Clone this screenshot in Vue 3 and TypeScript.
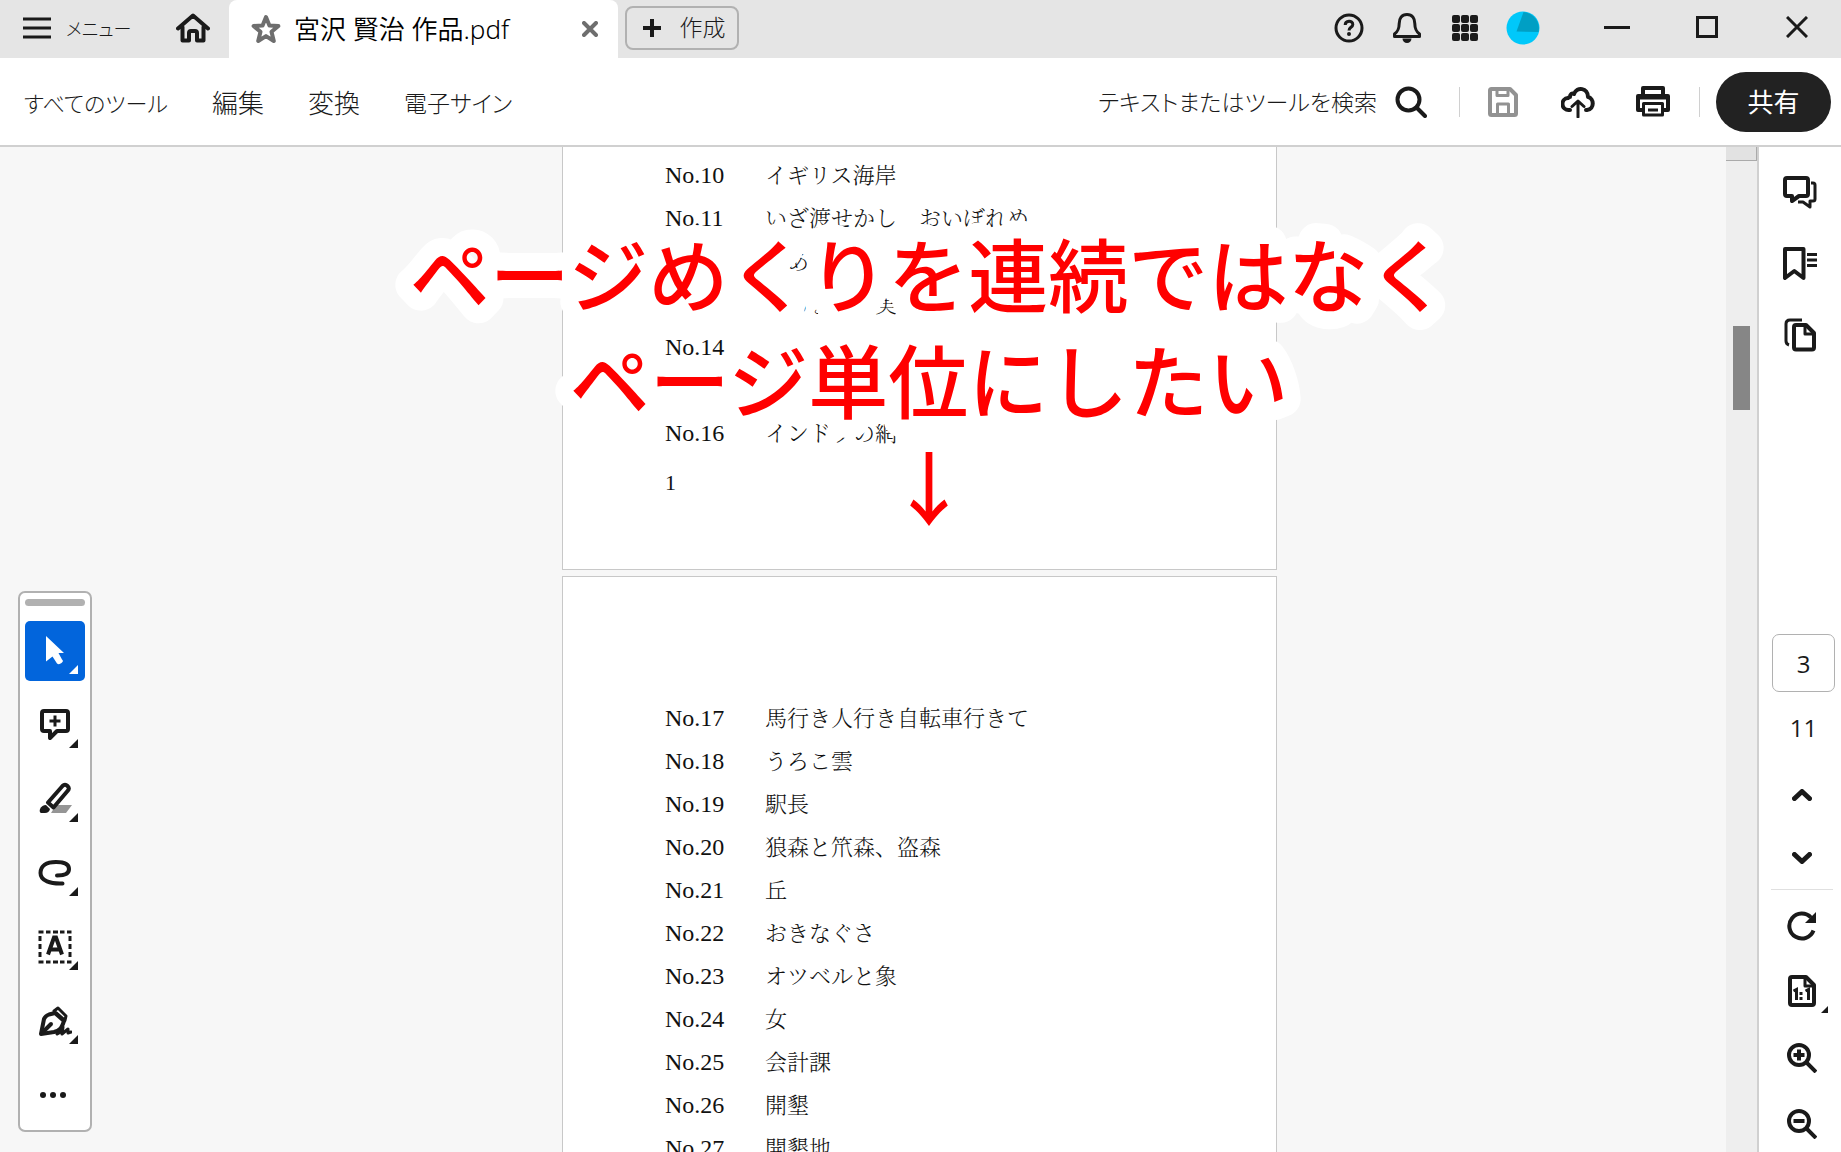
<script setup lang="ts">
interface Menu {
  label: string
  size: 'small' | 'medium' | 'large'
}

interface Entry {
  id: number
  no: string
  title: string
}

const menus: Menu[] = [
  { label: 'すべてのツール', size: 'small' },
  { label: '編集', size: 'large' },
  { label: '変換', size: 'large' },
  { label: '電子サイン', size: 'medium' },
]

const firstPage: Entry[] = [
  { id: 10, no: 'No.10', title: 'イギリス海岸' },
  { id: 11, no: 'No.11', title: 'いざ渡せかし　おいぼれめ' },
  { id: 12, no: '', title: '泉ある家' },
  { id: 13, no: '', title: 'いちょうの実' },
  { id: 14, no: 'No.14', title: '' },
  { id: 15, no: '', title: '' },
  { id: 16, no: 'No.16', title: 'インドラの網' },
]

const secondPage: Entry[] = [
  { id: 17, no: 'No.17', title: '馬行き人行き自転車行きて' },
  { id: 18, no: 'No.18', title: 'うろこ雲' },
  { id: 19, no: 'No.19', title: '駅長' },
  { id: 20, no: 'No.20', title: '狼森と笊森、盗森' },
  { id: 21, no: 'No.21', title: '丘' },
  { id: 22, no: 'No.22', title: 'おきなぐさ' },
  { id: 23, no: 'No.23', title: 'オツベルと象' },
  { id: 24, no: 'No.24', title: '女' },
  { id: 25, no: 'No.25', title: '会計課' },
  { id: 26, no: 'No.26', title: '開墾' },
  { id: 27, no: 'No.27', title: '開墾地' },
]
</script>

<template>
  <div class="app">
    <header class="titlebar">
      <button class="menu" type="button">
        <svg width="28" height="22" viewBox="0 0 28 22" fill="none" stroke="currentColor" stroke-width="3"><path d="M0 2h28M0 11h28M0 20h28" /></svg>
        <span>メニュー</span>
      </button>
      <button class="home" type="button" aria-label="ホーム">
        <svg width="34" height="30" viewBox="0 0 34 30" fill="none" stroke="currentColor" stroke-width="4" stroke-linejoin="round" stroke-linecap="round"><path d="M2 15.500 17 2.500l15 13M6.500 14v13.500h6.500v-7.500q0-2 2-2h4q2 0 2 2v7.500h6.500V14" /></svg>
      </button>
      <div class="tab">
        <svg class="star" width="30" height="30" viewBox="0 0 30 30" fill="none" stroke="currentColor" stroke-width="4" stroke-linejoin="round"><path d="m15 3 3.400 8.400 9 .6-6.900 5.800 2.300 9.200-7.800-4.900L7.200 27l2.300-9.200L2.600 12l9-.6z" /></svg>
        <span class="tab-title">宮沢 賢治 作品.pdf</span>
        <button class="tab-close" type="button" aria-label="タブを閉じる">
          <svg width="16" height="16" viewBox="0 0 16 16" fill="none" stroke="currentColor" stroke-width="4" stroke-linecap="round"><path d="m2 2 12 12M14 2 2 14" /></svg>
        </button>
      </div>
      <button class="create" type="button">
        <svg width="18" height="18" viewBox="0 0 18 18" fill="none" stroke="currentColor" stroke-width="4"><path d="M9 0v18M0 9h18" /></svg>
        <span>作成</span>
      </button>
      <div class="account">
        <button type="button" aria-label="ヘルプ">
          <svg width="30" height="30" viewBox="0 0 30 30" fill="none" stroke="currentColor" stroke-width="3"><circle cx="15" cy="15" r="13" /><path d="M11.200 12c0-5 7.600-5 7.600-.6 0 2.800-3.800 3-3.800 6" /><circle cx="15" cy="21" r="1" stroke-width="2" /></svg>
        </button>
        <button type="button" aria-label="通知">
          <svg width="30" height="32" viewBox="0 0 30 32" fill="none" stroke="currentColor" stroke-width="3" stroke-linejoin="round"><path d="M15 2.500c-5.500 0-7.800 4-7.800 9C7.200 18 5 20 2.500 22v2.500h25V22c-2.500-2-4.700-4-4.700-10.500 0-5-2.300-9-7.800-9z" /><path d="M10.500 26.500h9a4.500 4.500 0 0 1-9 0z" fill="currentColor" stroke="none" /></svg>
        </button>
        <button type="button" aria-label="アプリ">
          <svg width="28" height="28" viewBox="0 0 28 28" fill="currentColor"><g v-for="r in 3" :key="r"><rect v-for="c in 3" :key="c" :x="(c - 1) * 9 + 1" :y="(r - 1) * 9 + 1" width="8" height="8" rx="2" /></g></svg>
        </button>
        <button type="button" aria-label="アカウント">
          <svg width="34" height="34" viewBox="0 0 34 34"><circle cx="17" cy="17" r="16.500" fill="#00c8fa" /><path d="M17.500 1 10.500 20.500 32.500 21A16.500 16.500 0 0 0 17.500 1z" fill="#009fc4" /></svg>
        </button>
      </div>
      <div class="window-buttons">
        <button type="button" aria-label="最小化">
          <svg width="26" height="22" viewBox="0 0 26 22" fill="none" stroke="currentColor" stroke-width="3"><path d="M0 11.500h26" /></svg>
        </button>
        <button type="button" aria-label="最大化">
          <svg width="22" height="22" viewBox="0 0 22 22" fill="none" stroke="currentColor" stroke-width="3"><path d="M1.500 1.500h19v19h-19z" /></svg>
        </button>
        <button type="button" aria-label="閉じる">
          <svg width="22" height="22" viewBox="0 0 22 22" fill="none" stroke="currentColor" stroke-width="3"><path d="m1 1 20 20M21 1 1 21" /></svg>
        </button>
      </div>
    </header>

    <div class="toolbar">
      <nav class="menus">
        <button v-for="m in menus" :key="m.label" type="button" :class="m.size">{{ m.label }}</button>
      </nav>
      <button class="search" type="button">
        <span>テキストまたはツールを検索</span>
        <svg width="32" height="32" viewBox="0 0 32 32" fill="none" stroke="currentColor" stroke-width="4" stroke-linecap="round"><circle cx="13.500" cy="13.500" r="11" /><path d="m22 22 8 8" /></svg>
      </button>
      <span class="rule"></span>
      <div class="file-tools">
        <button type="button" aria-label="保存" disabled>
          <svg width="30" height="30" viewBox="0 0 30 30" fill="none" stroke="currentColor" stroke-width="4" stroke-linejoin="round"><path d="M2 3.500Q2 2 3.500 2H22l6 6v18.500q0 1.500-1.500 1.500h-23Q2 28 2 26.500z" /><path d="M9 2v6.500h11V2M9.500 28V17h11v11" stroke-width="3" /></svg>
        </button>
        <button type="button" aria-label="クラウドに保存">
          <svg width="34" height="32" viewBox="0 0 34 32" fill="none" stroke="currentColor" stroke-width="4" stroke-linecap="round" stroke-linejoin="round"><path d="M9 24H8a6 6 0 0 1-1-12c1-1 1-1 2-1 0-3 2-4 4-3 3-8 14-6 14 3 6 1 7 12-1 13h-1" /><path d="M17 31V16M11 20.500l6-5.500 6 5.500" stroke-width="3" /></svg>
        </button>
        <button type="button" aria-label="印刷">
          <svg width="34" height="32" viewBox="0 0 34 32" fill="none" stroke="currentColor" stroke-width="4" stroke-linejoin="round"><path d="M7 10V2h20v8" /><path d="M7 24H2V10h30v14h-5M2 11.500h30" /><path d="M7.500 17.500h19V29h-19zM12 24h10" stroke-width="3" /></svg>
        </button>
      </div>
      <span class="rule"></span>
      <button class="share" type="button">共有</button>
    </div>

    <div class="workspace">
      <main class="viewer">
        <article class="page page-first">
          <div v-for="e in firstPage" :key="e.id" class="row">
            <span class="no">{{ e.no }}</span><span>{{ e.title }}</span>
          </div>
          <p class="folio">1</p>
        </article>
        <article class="page page-second">
          <div v-for="e in secondPage" :key="e.id" class="row">
            <span class="no">{{ e.no }}</span><span>{{ e.title }}</span>
          </div>
        </article>
      </main>

      <div class="scrollbar">
        <span class="scroll-cap"></span>
        <span class="scroll-thumb"></span>
      </div>

      <aside class="rail">
        <div class="panels">
          <button type="button" aria-label="注釈">
            <svg width="34" height="34" viewBox="0 0 34 34" fill="none" stroke="currentColor" stroke-width="4" stroke-linejoin="round"><path d="M2 4q0-2 2-2h19q2 0 2 2v14q0 2-2 2h-7l-7 5v-5H4q-2 0-2-2z" /><path d="M28 7h2q2 0 2 2v14q0 2-2 2h-3v6l-7-5h-5" stroke-width="3" /></svg>
          </button>
          <button type="button" aria-label="しおり">
            <svg width="34" height="34" viewBox="0 0 34 34" fill="none" stroke="currentColor" stroke-width="4" stroke-linejoin="round"><path d="M2 2h18.500v29l-9.200-7L2 31z" /><path d="M24 7.500h10M24 13h10M24 18.500h10" stroke-width="3" /></svg>
          </button>
          <button type="button" aria-label="ページサムネール">
            <svg width="32" height="34" viewBox="0 0 32 34" fill="none" stroke="currentColor" stroke-width="4" stroke-linejoin="round"><path d="M10 9q0-2 2-2h10l8 8v14.500q0 2-2 2H12q-2 0-2-2z" /><path d="M21 7v9h9" stroke-width="3" /><path d="M5 27q-3-1-3-4V6q0-4 4-4h12" stroke-width="3" /></svg>
          </button>
        </div>
        <div class="paging">
          <input class="page-input" type="text" value="3" aria-label="ページ番号" />
          <span class="page-total">11</span>
          <button type="button" aria-label="前のページ">
            <svg width="20" height="12" viewBox="0 0 20 12" fill="none" stroke="currentColor" stroke-width="5" stroke-linecap="round" stroke-linejoin="round"><path d="m2.500 9.500 7.500-7 7.500 7" /></svg>
          </button>
          <button type="button" aria-label="次のページ">
            <svg width="20" height="12" viewBox="0 0 20 12" fill="none" stroke="currentColor" stroke-width="5" stroke-linecap="round" stroke-linejoin="round"><path d="m2.500 2.500 7.500 7 7.500-7" /></svg>
          </button>
        </div>
        <div class="zooming">
          <button type="button" aria-label="回転">
            <svg width="30" height="30" viewBox="0 0 30 30" fill="none" stroke="currentColor" stroke-width="4"><path d="M26.500 19.500A12.500 12.500 0 1 1 24 6.500" /><path d="M29 1v11H18z" fill="currentColor" stroke="none" /></svg>
          </button>
          <button type="button" aria-label="実際のサイズ" class="has-more">
            <svg width="28" height="34" viewBox="0 0 28 34" fill="none" stroke="currentColor" stroke-width="4" stroke-linejoin="round"><path d="M2 4q0-2 2-2h14l8 8v18q0 2-2 2H4q-2 0-2-2z" /><path d="M17 2v9h9" stroke-width="3" /><path d="m5.500 16 3-1.500V25M17.500 16l3-1.500V25M13 17v3M13 22v3" stroke-width="3" stroke-linejoin="miter" /></svg>
          </button>
          <button type="button" aria-label="ズームイン">
            <svg width="30" height="30" viewBox="0 0 30 30" fill="none" stroke="currentColor" stroke-width="4"><circle cx="12" cy="12" r="10" /><path d="m19 19 10 10M12 6.500v11M6.500 12h11" /></svg>
          </button>
          <button type="button" aria-label="ズームアウト">
            <svg width="30" height="30" viewBox="0 0 30 30" fill="none" stroke="currentColor" stroke-width="4"><circle cx="12" cy="12" r="10" /><path d="m19 19 10 10M6.500 12h11" /></svg>
          </button>
        </div>
      </aside>

      <div class="palette">
        <span class="grip"></span>
        <button type="button" class="has-more active" aria-label="選択">
          <svg width="34" height="34" viewBox="0 0 34 34" fill="currentColor"><path d="M8 2v25.500l6.500-5 4.500 7q2 1.500 4.500-.5t.5-3.500L20.500 19H26z" /></svg>
        </button>
        <button type="button" class="has-more" aria-label="注釈を追加">
          <svg width="34" height="34" viewBox="0 0 34 34" fill="none" stroke="currentColor" stroke-width="4" stroke-linejoin="round"><path d="M4 5q0-2 2-2h22q2 0 2 2v16q0 2-2 2H19l-7 7v-7H6q-2 0-2-2z" /><path d="M17 7.500v11M11.500 13h11" stroke-width="3" /></svg>
        </button>
        <button type="button" class="has-more" aria-label="ハイライト">
          <svg width="34" height="34" viewBox="0 0 34 34" fill="none" stroke="currentColor" stroke-width="4" stroke-linejoin="round"><path d="M18 23h16l-6 8H13z" fill="#959595" stroke="none" /><path d="M10 20.500 24.500 4q2.500-2.500 5 0t0 5L15.500 25.500z" /><path d="M2 27q2-4 6-4l4 4q-1 4-5 4H3q-2-1-1-4z" fill="currentColor" stroke="none" /></svg>
        </button>
        <button type="button" class="has-more" aria-label="描画">
          <svg width="34" height="26" viewBox="0 0 34 26" fill="none" stroke="currentColor" stroke-width="4" stroke-linecap="round"><path d="M19 15.500q12 0 12-6.500c0-5-6-7-13-7C8 2 2.500 6 2.500 13c0 8 10 11 22 10.500" /></svg>
        </button>
        <button type="button" class="has-more" aria-label="テキストボックス">
          <svg width="34" height="34" viewBox="0 0 34 34" fill="none" stroke="currentColor" stroke-width="3"><path d="M.5 2h5M8 2h4.500M15 2h5M22 2h4.500M29 2h4.500M.5 32h5M8 32h4.500M15 32h5M22 32h4.500M29 32h4.500M2 6v5M2 14v5M2 22v5M32 6v5M32 14v5M32 22v5" /><path d="m10 24.500 6-17h2l6 17M13 19.500h8" stroke-width="4" /></svg>
        </button>
        <button type="button" class="has-more" aria-label="署名">
          <svg width="34" height="32" viewBox="0 0 34 32" fill="none" stroke="currentColor" stroke-width="4" stroke-linejoin="round" stroke-linecap="round"><path d="M3 29 6 14q1-3 5-4.500l6-1.500 9 8q-2 6-4 8t-6 3z" /><path d="m4 28 9-9" /><path d="m16 6 4-3 8 8-1 4.500z" stroke-width="3" /><path d="M19 29q5-2 6-7l-1 7 6-5v4l3-1" stroke-width="3" /></svg>
        </button>
        <button type="button" aria-label="その他">
          <svg width="34" height="6" viewBox="0 0 34 6" fill="currentColor"><circle cx="5" cy="3" r="3" /><circle cx="15" cy="3" r="3" /><circle cx="25" cy="3" r="3" /></svg>
        </button>
      </div>

      <svg class="caption" width="1100" height="420" viewBox="0 0 1100 420">
        <text x="550" y="98">ページめくりを連続ではなく</text>
        <text x="550" y="204">ページ単位にしたい</text>
        <text x="550" y="311">↓</text>
      </svg>
    </div>
  </div>
</template>

<style>
body {
  margin: 0;
}
</style>

<style scoped>
.app {
  display: flex;
  flex-direction: column;
  height: 100vh;
  overflow: hidden;
  background: #fff;
  color: #1a1a1a;
  font-family: "Noto Sans CJK JP", sans-serif;
  font-weight: 300;
}

button {
  display: flex;
  align-items: center;
  justify-content: center;
  padding: 0;
  border: 0;
  background: none;
  color: inherit;
  font: inherit;
  font-feature-settings: "palt";
  white-space: nowrap;
}

svg {
  display: block;
  flex: none;
}

.titlebar {
  display: flex;
  align-items: center;
  box-sizing: border-box;
  flex: none;
  height: 58px;
  padding-bottom: 2px;
  background: #e5e5e5;
}

.menu {
  gap: 15px;
  margin-left: 23px;
  font-size: 18px;
}

.menu span {
  width: 64px;
  text-align: left;
}

.home {
  width: 34px;
  margin-left: 46px;
}

.tab {
  display: flex;
  align-items: center;
  box-sizing: border-box;
  width: 389px;
  height: 58px;
  margin: 0 0 -2px 19px;
  padding: 0 20px 0 22px;
  border-radius: 8px 8px 0 0;
  background: #fff;
}

.star {
  color: #6e6e6e;
}

.tab-title {
  flex: 1;
  margin-left: 13px;
  color: #000;
  font-family: "Noto Sans", "Noto Sans CJK JP", sans-serif;
  font-size: 26px;
  font-weight: 350;
  line-height: 40px;
  white-space: nowrap;
}

.tab-close {
  color: #6e6e6e;
}

.create {
  box-sizing: border-box;
  gap: 19px;
  width: 114px;
  height: 44px;
  margin-left: 7px;
  padding-left: 4px;
  border: 2px solid #b1b1b1;
  border-radius: 8px;
  font-size: 23px;
}

.create span {
  line-height: 34px;
  padding-bottom: 4px;
}

.account {
  display: flex;
  margin-left: auto;
}

.account button {
  width: 58px;
  height: 56px;
}

.window-buttons {
  display: flex;
  margin-left: 19px;
}

.window-buttons button {
  box-sizing: border-box;
  width: 90px;
  height: 56px;
  padding: 0 0 2px 2px;
}

.toolbar {
  display: flex;
  align-items: center;
  flex: none;
  height: 87px;
  border-bottom: 2px solid #d0d0d0;
}

.menus {
  display: flex;
  align-items: center;
  gap: 44px;
  margin-left: 24px;
}

.small {
  font-size: 22px;
}

.medium {
  font-size: 23px;
}

.large {
  font-size: 26px;
}

.search {
  gap: 18px;
  margin-left: auto;
  margin-right: 32px;
  font-size: 23px;
}

.search span {
  padding-bottom: 2px;
}

.rule {
  width: 1px;
  height: 30px;
  background: #d0d0d0;
}

.file-tools {
  display: flex;
  margin: 0 9px 0 5px;
}

.file-tools button {
  width: 75px;
  height: 60px;
}

.file-tools button:disabled {
  color: #929292;
}

.share {
  box-sizing: border-box;
  width: 115px;
  height: 60px;
  margin: 0 10px 0 16px;
  padding-bottom: 3px;
  border-radius: 30px;
  background: #222;
  color: #fff;
  font-size: 26px;
  font-weight: 400;
}

.workspace {
  position: relative;
  display: flex;
  flex: 1;
  min-height: 0;
}

.viewer {
  display: flex;
  flex-direction: column;
  align-items: center;
  gap: 6px;
  flex: 1;
  min-width: 0;
  padding-left: 113px;
  overflow: hidden;
  background: #f7f7f7;
}

.page {
  box-sizing: border-box;
  flex: none;
  width: 715px;
  padding: 0 102px;
  border: 1px solid #c8c8c8;
  background: #fff;
  color: #111;
  font-family: "Liberation Serif", "Noto Serif CJK JP", "Noto Sans CJK JP", serif;
  font-size: 22px;
  font-weight: 300;
  line-height: 43px;
}

.page-first {
  height: 423px;
  padding-top: 7px;
  border-top: 0;
}

.page-second {
  height: 1010px;
  padding-top: 120px;
}

.row {
  display: flex;
  height: 43px;
  white-space: nowrap;
}

.no {
  width: 100px;
  font-size: 24px;
}

.folio {
  margin: 6px 0 0;
}

.scrollbar {
  display: flex;
  flex-direction: column;
  align-items: center;
  flex: none;
  width: 31px;
  background: #eee;
}

.scroll-cap {
  box-sizing: border-box;
  width: 31px;
  height: 14px;
  border-right: 1px solid #aaa;
  border-bottom: 1px solid #aaa;
  background: #e2e2e2;
}

.scroll-thumb {
  width: 17px;
  height: 84px;
  margin-top: 165px;
  background: #868686;
}

.rail {
  display: flex;
  flex-direction: column;
  align-items: center;
  justify-content: space-between;
  box-sizing: border-box;
  flex: none;
  width: 84px;
  border-left: 2px solid #d0d0d0;
  background: #fff;
}

.panels {
  padding-top: 10px;
}

.panels button {
  width: 71px;
  height: 71px;
}

.paging {
  display: flex;
  flex-direction: column;
  align-items: center;
  width: 62px;
  margin-top: auto;
  margin-left: 4px;
  border-bottom: 1px solid #e0e0e0;
}

.paging button {
  width: 62px;
  height: 63px;
}

.page-input {
  box-sizing: border-box;
  width: 63px;
  height: 58px;
  margin-left: 3px;
  padding: 0;
  border: 1px solid #b1b1b1;
  border-radius: 7px;
  background: #fff;
  color: inherit;
  font-family: "Open Sans", sans-serif;
  font-size: 24px;
  font-weight: 400;
  text-align: center;
}

.page-total {
  margin-left: 3px;
  font-family: "Open Sans", sans-serif;
  font-size: 24px;
  font-weight: 400;
  line-height: 71px;
}

.zooming {
  display: flex;
  flex-direction: column;
  gap: 10px;
  margin-left: 4px;
  padding-top: 8px;
}

.zooming button {
  width: 56px;
  height: 56px;
}

.has-more {
  position: relative;
}

.has-more::after {
  position: absolute;
  right: 7px;
  bottom: 7px;
  width: 9px;
  height: 9px;
  background: currentColor;
  clip-path: polygon(100% 0, 100% 100%, 0 100%);
  content: "";
}

.zooming .has-more::after {
  right: 2px;
  bottom: 7px;
  width: 7px;
  height: 7px;
}

.palette {
  position: absolute;
  bottom: 20px;
  left: 18px;
  display: flex;
  flex-direction: column;
  gap: 14px;
  padding: 6px 5px 5px;
  border: 2px solid #b1b1b1;
  border-radius: 7px;
  background: #fff;
}

.palette button {
  width: 60px;
  height: 60px;
  border-radius: 5px;
}

.palette .active {
  background: #0265dc;
  color: #fff;
}

.grip {
  height: 7px;
  margin-bottom: 1px;
  border-radius: 4px;
  background: #b1b1b1;
}

.caption {
  position: absolute;
  top: 61px;
  right: 0;
  left: 17px;
  margin: 0 auto;
  fill: #f00;
  stroke: #fff;
  stroke-width: 36px;
  stroke-linejoin: round;
  stroke-linecap: round;
  paint-order: stroke fill;
  font-size: 80px;
  font-weight: 500;
  text-anchor: middle;
  pointer-events: none;
}
</style>
